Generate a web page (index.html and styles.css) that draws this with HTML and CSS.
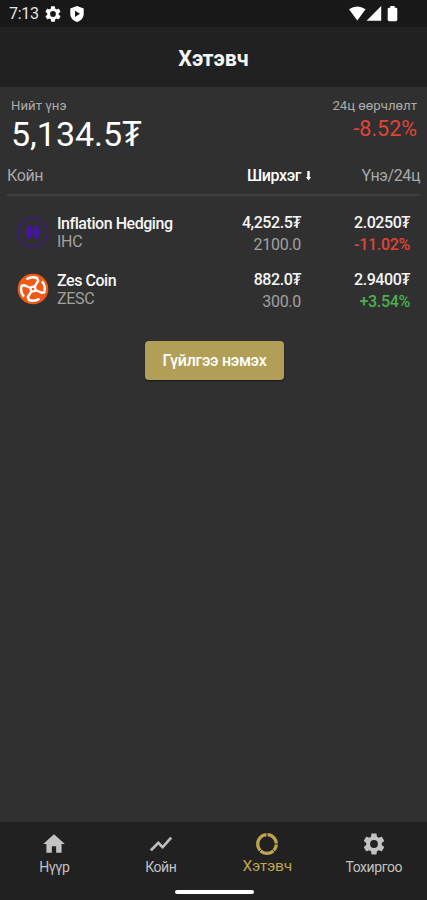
FILE: index.html
```html
<!DOCTYPE html>
<html lang="mn">
<head>
<meta charset="utf-8">
<meta name="viewport" content="width=device-width, initial-scale=1">
<title>Хэтэвч</title>
<link rel="stylesheet" href="styles.css">
</head>
<body>
<div class="app">
  <div class="status">
    <span class="clock">7:13</span>
    <svg width="16" height="16" viewBox="2 2 20 20"><path fill="#fff" fill-rule="evenodd" d="M19.14 12.94c.04-.3.06-.61.06-.94s-.02-.64-.07-.94l2.03-1.58c.18-.14.23-.41.12-.61l-1.92-3.32c-.12-.22-.37-.29-.59-.22l-2.39.96c-.5-.38-1.03-.7-1.62-.94l-.36-2.54c-.04-.24-.24-.41-.48-.41h-3.84c-.24 0-.43.17-.47.41l-.36 2.54c-.59.24-1.13.57-1.62.94l-2.39-.96c-.22-.08-.47 0-.59.22L2.74 8.87c-.12.21-.08.47.12.61l2.03 1.58c-.05.3-.09.63-.09.94s.02.64.07.94l-2.03 1.58c-.18.14-.23.41-.12.61l1.92 3.32c.12.22.37.29.59.22l2.39-.96c.5.38 1.03.7 1.62.94l.36 2.54c.05.24.24.41.48.41h3.84c.24 0 .44-.17.47-.41l.36-2.54c.59-.24 1.13-.56 1.62-.94l2.39.96c.22.08.47 0 .59-.22l1.92-3.32c.12-.22.07-.47-.12-.61zM12 15.6A3.6 3.6 0 1 1 12 8.4a3.6 3.6 0 0 1 0 7.2z"/></svg>
    <svg class="shield" width="14" height="16" viewBox="0 0 14 16"><path fill="#fff" d="M7 0l6.7 2.5v5.2c0 4-2.8 7-6.7 8.3C3.1 14.7.3 11.7.3 7.7V2.5z"/><path fill="#181818" d="M5 4.7l5 3.1-5 3.1z"/></svg>
    <svg class="signals" width="50" height="16" viewBox="0 0 50 16" fill="#fff"><path d="M0 3.2Q8.3-2.2 16.6 3.2L8.3 14.5z"/><path d="M32.2 0v14.8H17.6z"/><path d="M41.3 0h4.4v1.7h1.2q1.4 0 1.4 1.4v10.7q0 1.4-1.4 1.4h-6.8q-1.4 0-1.4-1.4V3.100q0-1.400 1.400-1.400h1.200z"/></svg>
  </div>
  <header class="header"><h1 class="title">Хэтэвч</h1></header>
  <main class="main">
    <section class="summary">
      <div><div class="caption">Нийт үнэ</div><div class="total">5,134.5₮</div></div>
      <div class="right"><div class="caption">24ц өөрчлөлт</div><div class="change">-8.52%</div></div>
    </section>
    <div class="columns">
      <span>Койн</span>
      <span class="col-amount">Ширхэг <svg width="5" height="10" viewBox="0 0 5 10"><path fill="#fff" d="M1.300 0h2.400v6H5L2.500 9.500 0 6h1.300z"/></svg></span>
      <span class="col-price">Үнэ/24ц</span>
    </div>
    <section class="coins">
      <div class="coin">
        <svg class="logo" width="32" height="32" viewBox="0 0 32 32"><circle cx="16" cy="16.500" r="14.500" fill="none" stroke="#3c1a80" stroke-width="1.500"/><path fill="#4814a8" d="M13.500 8.500l1.200 1.500v4.500h2.600V10l1.200-1.500c2.500 1 4 3 4 5.500v6l-2.500 4-2.700-3v-3.500h-2.600V21L12 24l-2.500-4v-6c0-2.500 1.500-4.500 4-5.500z"/></svg>
        <div class="name"><div class="strong">Inflation Hedging</div><div class="muted">IHC</div></div>
        <div class="amount"><div class="strong">4,252.5₮</div><div class="muted number">2100.0</div></div>
        <div class="price"><div class="strong">2.0250₮</div><div class="percent down">-11.02%</div></div>
      </div>
      <div class="coin">
        <svg class="logo" width="32" height="32" viewBox="0 0 32 32"><circle cx="16" cy="16" r="15.300" fill="#f15a16"/><g fill="none" stroke="#fff" stroke-width="2.400" stroke-linejoin="round"><path d="M9.500 6.200A11.800 11.800 0 0 1 20 5l1.200 3L16 16l-5.200 8 1.200 3a11.800 11.800 0 0 0 10.500-1.200"/><path d="M25 8.400a11.800 11.800 0 0 1 2.300 11l-2.300.4L16 16l-9-3.800-2.300.4a11.800 11.800 0 0 0 2.300 11"/></g><circle cx="16" cy="16" r="3.500" fill="#fff"/><circle cx="16" cy="16" r="1.300" fill="#f15a16"/></svg>
        <div class="name"><div class="strong">Zes Coin</div><div class="muted">ZESC</div></div>
        <div class="amount"><div class="strong">882.0₮</div><div class="muted number">300.0</div></div>
        <div class="price"><div class="strong">2.9400₮</div><div class="percent up">+3.54%</div></div>
      </div>
    </section>
    <button class="add" type="button">Гүйлгээ нэмэх</button>
  </main>
  <footer class="footer">
    <nav class="nav">
      <div class="tab"><svg width="26" height="26" viewBox="0 0 24 24"><path fill="currentColor" d="M10 20v-6h4v6h5v-8h3L12 3 2 12h3v8z"/></svg><span>Нүүр</span></div>
      <div class="tab"><svg width="26" height="26" viewBox="0 0 24 24"><path fill="currentColor" stroke="currentColor" stroke-width=".5" d="M3.500 18.490l6-6.010 4 4L22 6.920l-1.410-1.410-7.090 7.970-4-4L2 16.990z"/></svg><span>Койн</span></div>
      <div class="tab active"><svg width="26" height="26" viewBox="0 0 26 26"><circle cx="13" cy="13" r="9.300" fill="none" stroke="currentColor" stroke-width="3.200"/><path stroke="#212121" stroke-width="1" d="M13 1v5M20 13h5M18.500 18.500l3 3M7.500 18.500l-3 3"/></svg><span>Хэтэвч</span></div>
      <div class="tab"><svg width="26" height="26" viewBox="0 0 24 24"><path fill="currentColor" fill-rule="evenodd" d="M19.140 12.940c.04-.3.06-.61.06-.94s-.02-.64-.07-.94l2.030-1.580c.18-.14.23-.41.12-.61l-1.920-3.320c-.12-.22-.37-.29-.59-.22l-2.390.96c-.5-.38-1.030-.7-1.620-.94l-.36-2.540c-.04-.24-.24-.41-.48-.41h-3.840c-.24 0-.43.17-.47.41l-.36 2.540c-.59.24-1.130.57-1.620.94l-2.390-.96c-.22-.08-.47 0-.59.22L2.740 8.870c-.12.21-.08.47.12.61l2.030 1.580c-.05.3-.09.63-.09.94s.02.64.07.94l-2.030 1.580c-.18.14-.23.41-.12.61l1.920 3.320c.12.22.37.29.59.22l2.390-.96c.5.38 1.030.7 1.620.94l.36 2.540c.05.24.24.41.48.41h3.840c.24 0 .44-.17.47-.41l.36-2.540c.59-.24 1.130-.56 1.620-.94l2.390.96c.22.08.47 0 .59-.22l1.920-3.320c.12-.22.07-.47-.12-.61zM12 15.600A3.600 3.600 0 1 1 12 8.400a3.600 3.600 0 0 1 0 7.200z"/></svg><span>Тохиргоо</span></div>
    </nav>
    <div class="handle"></div>
  </footer>
</div>
</body>
</html>
```
FILE: styles.css
```css
* { box-sizing: border-box; }
body { margin: 0; background: #303030; color: #fff; font-family: Roboto, "Noto Sans", sans-serif; }
svg { display: block; flex: none; }
.app { height: 900px; display: flex; flex-direction: column; overflow: hidden; }
.status { height: 27px; padding: 0 28px 0 9px; background: #181818; display: flex; align-items: center; }
.clock { width: 36px; font-size: 16px; letter-spacing: -0.3px; line-height: 20px; color: #e4e4e4; }
.shield { margin-left: 9px; }
.signals { margin-left: auto; }
.header { height: 60px; padding-top: 3px; background: #212121; display: flex; align-items: center; justify-content: center; }
.title { margin: 0; font-size: 21.5px; line-height: 26px; font-weight: 700; color: #f5f5f5; }
.main { flex: 1; display: flex; flex-direction: column; }
.summary { height: 72px; padding: 11px 10px 0 11px; display: flex; justify-content: space-between; }
.right { text-align: right; }
.caption { font-size: 13.2px; line-height: 16px; color: #acacac; }
.total { font-size: 34px; line-height: 40px; }
.change { font-size: 21.5px; line-height: 29px; color: #e04438; }
.columns { height: 37px; margin: 0 7px; padding-top: 7px; border-bottom: 2px solid #404040; display: grid; grid-template-columns: 155px 149px 1fr; align-items: start; font-size: 16px; letter-spacing: -0.4px; line-height: 20px; color: #a9a9a9; }
.col-amount { display: flex; align-items: center; justify-content: flex-end; gap: 5px; font-weight: 500; color: #fff; }
.col-price { text-align: right; }
.coins { padding: 16px 17px 0; }
.coin { height: 57px; display: grid; grid-template-columns: 40px 144px 100px 109px; align-items: start; }
.logo { margin-top: 4px; }
.name { padding-top: 3px; }
.strong { font-size: 16px; letter-spacing: -0.45px; line-height: 18px; font-weight: 500; color: #f5f5f5; }
.muted { font-size: 16px; letter-spacing: -0.3px; line-height: 18px; color: #a0a0a0; }
.amount, .price { text-align: right; padding-top: 2px; }
.number, .percent { line-height: 25px; }
.percent { font-size: 16px; letter-spacing: -0.3px; font-weight: 500; }
.down { color: #e04438; }
.up { color: #4caf50; }
.add { width: 139px; height: 39px; margin: 15px 0 0 145px; padding: 1px 0 0; border: 0; border-radius: 4px; background: #b29f57; color: #fff; font: 500 16px/20px Roboto, "Noto Sans", sans-serif; letter-spacing: -0.3px; box-shadow: 0 1px 2px #17191c; }
.footer { height: 78px; background: #212121; display: flex; flex-direction: column; align-items: center; }
.nav { width: 100%; height: 68px; padding: 9px 0 0 1px; display: grid; grid-template-columns: repeat(4, 1fr); }
.tab { display: flex; flex-direction: column; align-items: center; color: #c2c2c2; font-size: 14px; letter-spacing: -0.45px; line-height: 20px; }
.active { color: #bda451; font-size: 15.500px; letter-spacing: -0.2px; line-height: 18px; }
.handle { width: 79px; height: 4px; margin-left: 1px; border-radius: 2px; background: #fff; }
```
